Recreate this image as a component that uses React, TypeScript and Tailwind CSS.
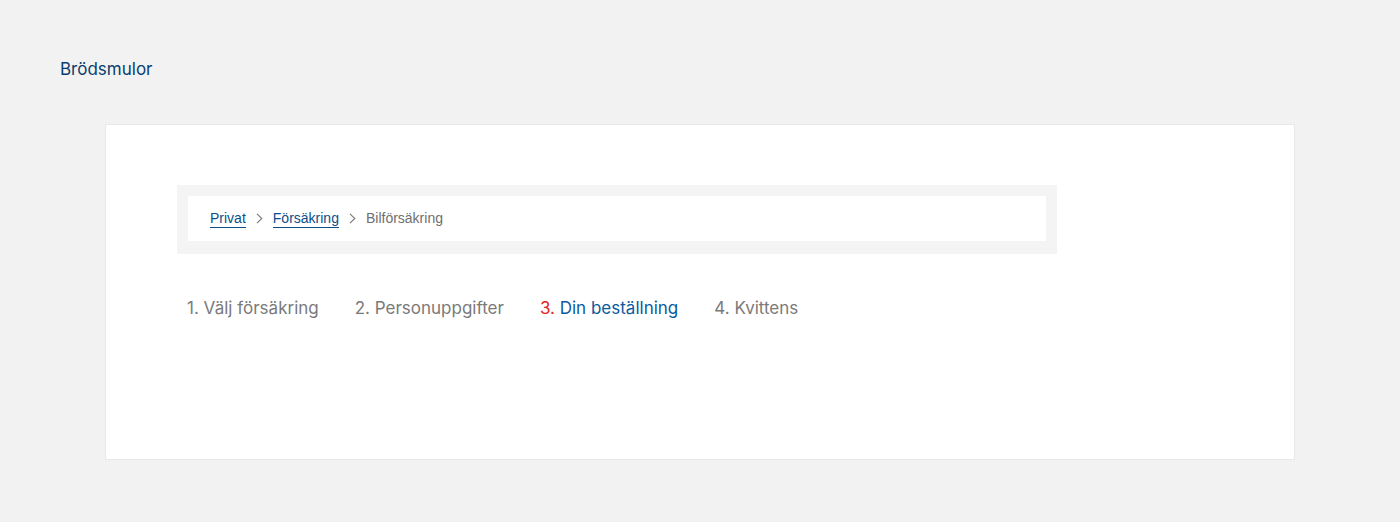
const crumbs = [
  { label: "Privat", href: "#" },
  { label: "Försäkring", href: "#" },
  { label: "Bilförsäkring" },
];

const steps = [
  { n: 1, label: "Välj försäkring" },
  { n: 2, label: "Personuppgifter" },
  { n: 3, label: "Din beställning", active: true },
  { n: 4, label: "Kvittens" },
];

function Chevron() {
  return (
    <svg width="7" height="11" viewBox="0 0 7 11" fill="none" className="mx-[10px]">
      <path d="M1 0.8L5.8 5.5L1 10.2" stroke="#7a7a7a" strokeWidth="1.1" />
    </svg>
  );
}

export default function App() {
  return (
    <div className="min-h-[522px] bg-[#f2f2f2] px-[60px] pt-[57px] font-['Inter',sans-serif]">
      <h1 className="text-[17px] leading-6 text-[#0b3e6f]">Brödsmulor</h1>

      <div className="mt-[43px] ml-[45px] w-[1190px] h-[336px] bg-white border border-[#e8e8e8] pt-[60px] pl-[71px]">
        {/* Breadcrumb */}
        <div className="w-[880px] bg-[#f4f4f4] pt-[11px] px-[11px] pb-[13px]">
          <nav className="flex items-center h-[45px] bg-white pl-[22px] font-['Liberation_Sans',Arial,sans-serif] text-[14px]">
            {crumbs.map((c, i) => (
              <div key={c.label} className="flex items-center">
                {i > 0 && <Chevron />}
                {c.href ? (
                  <a href={c.href} className="text-[#0b4f8a] border-b border-[#0b4f8a] leading-[18px]">
                    {c.label}
                  </a>
                ) : (
                  <span className="text-[#6f6f6f] leading-[18px] pb-px">{c.label}</span>
                )}
              </div>
            ))}
          </nav>
        </div>

        {/* Steps */}
        <ol className="flex gap-[36px] mt-[42px] ml-[10px] text-[17px] leading-6 text-[#7a7a7a]">
          {steps.map((s) => (
            <li key={s.n}>
              <span className={s.active ? "text-[#e0261c]" : ""}>{s.n}.</span>{" "}
              <span className={s.active ? "text-[#0b5a9e]" : ""}>{s.label}</span>
            </li>
          ))}
        </ol>
      </div>
    </div>
  );
}
